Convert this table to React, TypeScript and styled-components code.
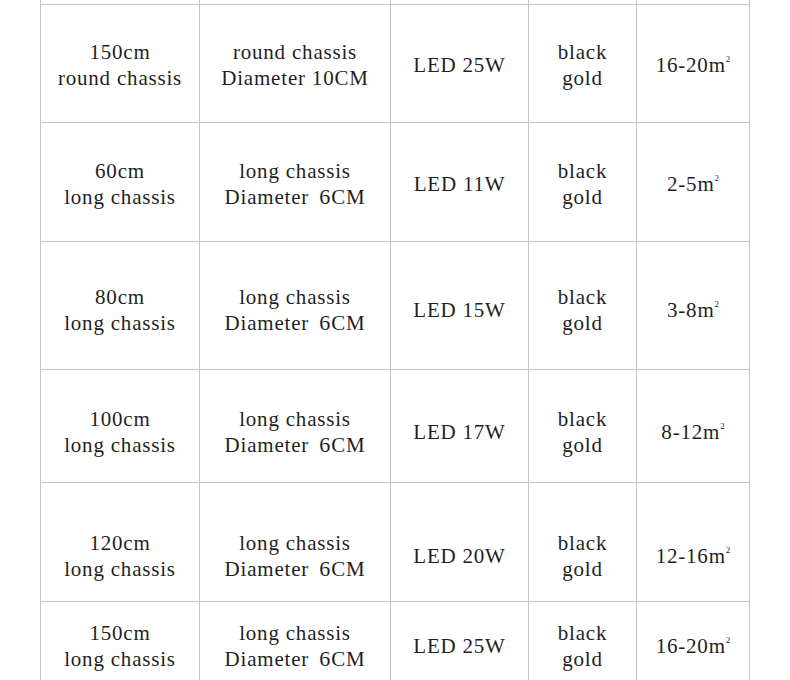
import styled, { createGlobalStyle } from "styled-components";

const GlobalStyle = createGlobalStyle`
  body {
    margin: 0;
    background: #ffffff;
  }
`;

type Row = {
  length: string;
  chassis: string;
  shape: string;
  diameter: string;
  power: string;
  area: string;
  height: number;
  shift: number;
};

const rows: Row[] = [
  { length: "150cm", chassis: "round chassis", shape: "round chassis", diameter: "10CM", power: "LED 25W", area: "16-20m", height: 118, shift: 4 },
  { length: "60cm", chassis: "long chassis", shape: "long chassis", diameter: "6CM", power: "LED 11W", area: "2-5m", height: 119, shift: 4 },
  { length: "80cm", chassis: "long chassis", shape: "long chassis", diameter: "6CM", power: "LED 15W", area: "3-8m", height: 128, shift: 10 },
  { length: "100cm", chassis: "long chassis", shape: "long chassis", diameter: "6CM", power: "LED 17W", area: "8-12m", height: 113, shift: 12 },
  { length: "120cm", chassis: "long chassis", shape: "long chassis", diameter: "6CM", power: "LED 20W", area: "12-16m", height: 119, shift: 28 },
  { length: "150cm", chassis: "long chassis", shape: "long chassis", diameter: "6CM", power: "LED 25W", area: "16-20m", height: 90, shift: 0 },
];

const widths = [159, 191, 138, 108, 113];

const serif = `"Liberation Serif", "DejaVu Serif", "Noto Serif", "Times New Roman", Times, serif`;

const Sheet = styled.table`
  margin-left: 40px;
  border-collapse: collapse;
  table-layout: fixed;
  width: 709px;
`;

const Line = styled.tr<{ $h: number; $shift: number }>`
  height: ${(p) => p.$h}px;

  td {
    padding-top: ${(p) => p.$shift}px;
  }
`;

const Cell = styled.td`
  border: 1px solid #c4c4c4;
  text-align: center;
  vertical-align: middle;
  padding: 0;
  white-space: nowrap;
  font-family: ${serif};
  font-size: 21px;
  letter-spacing: 0.8px;
  line-height: 26px;
  color: #1f1f1f;
`;

const Edge = styled.tr`
  height: 4px;

  td {
    border-top: none;
  }
`;

const Six = styled.span`
  margin-left: 10px;
  margin-right: 1px;
  font-family: ${serif};
  font-size: 22px;
  letter-spacing: 0;
`;

const Sq = styled.span`
  display: inline-block;
  font-size: 9px;
  line-height: 9px;
  vertical-align: 10px;
  letter-spacing: 0;
`;

const Diameter = ({ value }: { value: string }) =>
  value.startsWith("6") ? (
    <>
      Diameter
      <Six>6</Six>CM
    </>
  ) : (
    <>Diameter {value}</>
  );

const App = () => (
  <>
    <GlobalStyle />
    <Sheet>
      <colgroup>
        {widths.map((w, i) => (
          <col key={i} style={{ width: w }} />
        ))}
      </colgroup>
      <tbody>
        <Edge>
          {widths.map((_, i) => (
            <Cell key={i} />
          ))}
        </Edge>
        {rows.map((r, i) => (
          <Line key={i} $h={r.height} $shift={r.shift}>
            <Cell>
              {r.length}
              <br />
              {r.chassis}
            </Cell>
            <Cell>
              {r.shape}
              <br />
              <Diameter value={r.diameter} />
            </Cell>
            <Cell>{r.power}</Cell>
            <Cell>
              black
              <br />
              gold
            </Cell>
            <Cell>
              {r.area}
              <Sq>2</Sq>
            </Cell>
          </Line>
        ))}
      </tbody>
    </Sheet>
  </>
);

export default App;
